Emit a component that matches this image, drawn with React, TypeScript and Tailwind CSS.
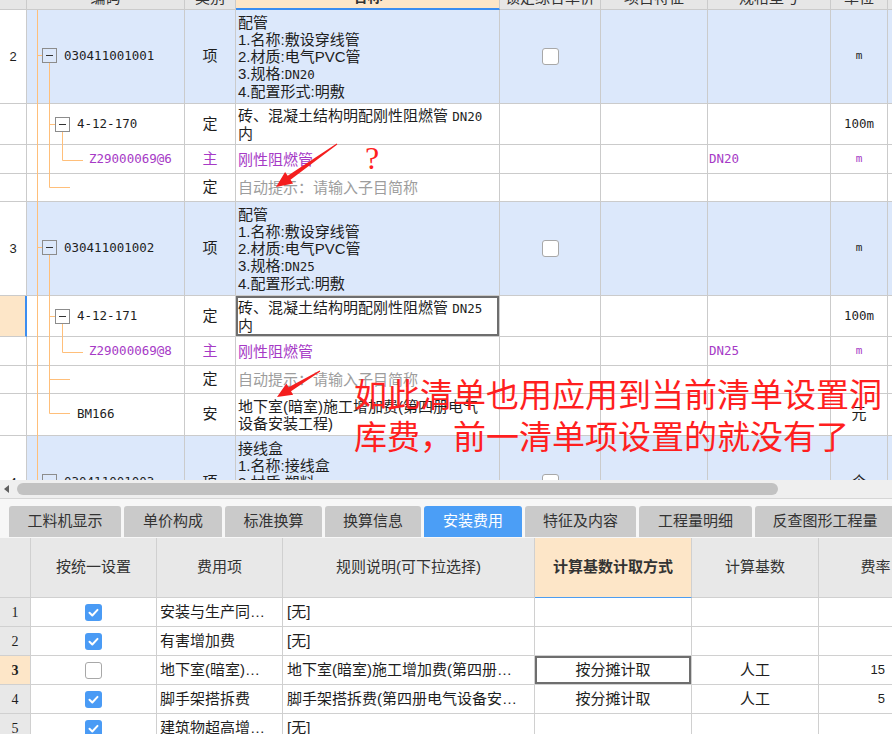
import React from "react";

const bd = "border-[#cbcbcb]";
const lbd = "border-[#d0d0d0]";
const mono = "font-['DejaVu_Sans_Mono',monospace] text-[12.5px]";
const purple = "text-[#a63ac6]";
const blueBg = "bg-[#dce8fb]";
const topCols = "grid grid-cols-[27px_158px_51px_264px_101px_107px_123px_57px_1fr]";
const lowCols = "grid grid-cols-[31px_126px_126px_252px_157px_127px_1fr]";

const M = ({ children, className = "" }: { children: React.ReactNode; className?: string }) => (
  <span className={`${mono} ${className}`}>{children}</span>
);

const Unit = ({ c = "" }: { c?: string }) => (
  <span className={`font-['DejaVu_Sans_Mono',monospace] text-[11px] ${c}`}>m</span>
);

const EmptyBox = () => (
  <span className="inline-block h-[17px] w-[17px] rounded-[3px] border border-[#a8a8a8] bg-white" />
);

const CheckedBox = () => (
  <span className="flex h-[17px] w-[17px] items-center justify-center rounded-[3px] bg-[#4a9bf5]">
    <svg width="13" height="13" viewBox="0 0 13 13">
      <path d="M2.5 6.8l2.8 2.7 5.2-5.6" fill="none" stroke="#fff" strokeWidth="2" strokeLinecap="round" strokeLinejoin="round" />
    </svg>
  </span>
);

type TopRowProps = {
  h: string;
  blue?: boolean;
  num?: string;
  selected?: boolean;
  code?: React.ReactNode;
  pad?: string;
  kind?: React.ReactNode;
  name?: React.ReactNode[];
  check?: boolean;
  spec?: React.ReactNode;
  unit?: React.ReactNode;
};

const TopRow = ({ h, blue, num, selected, code, pad = "pl-[37px]", kind, name = [], check, spec, unit }: TopRowProps) => {
  const bg = blue ? blueBg : "bg-white";
  const cell = `flex items-center border-r border-b ${bd} ${bg}`;
  return (
    <div className={`${topCols} ${h}`}>
      <div
        className={`flex items-center justify-center border-b ${bd} text-[13px] ${
          selected ? "border-r-2 border-r-[#3b8df0] bg-[#fde6c8]" : "border-r bg-white"
        }`}
      >
        {num}
      </div>
      <div className={`${cell} ${pad}`}>{code}</div>
      <div className={`${cell} justify-center`}>{kind}</div>
      <div
        className={`flex flex-col justify-center overflow-hidden whitespace-nowrap border-r border-b ${bd} ${bg} pl-[2px] leading-[17px] ${
          selected ? "shadow-[inset_0_0_0_2px_#6e6e6e]" : ""
        }`}
      >
        {name.map((n, i) => (
          <div key={i}>{n}</div>
        ))}
      </div>
      <div className={`${cell} justify-center`}>{check && <EmptyBox />}</div>
      <div className={cell} />
      <div className={`${cell} pl-px`}>{spec}</div>
      <div className={`${cell} justify-center`}>{unit}</div>
      <div className={`border-b ${bd} ${bg}`} />
    </div>
  );
};

const HeadCell = ({ children, active }: { children?: React.ReactNode; active?: boolean }) => (
  <div
    className={`flex h-[10px] items-end justify-center overflow-hidden border-r ${bd} ${
      active ? "border-b-2 border-b-[#3b8df0] bg-[#fde6c8] font-bold" : "border-b bg-[#e6e6e6]"
    }`}
  >
    <span className="mb-[4px] text-[15px] leading-[15px] text-[#333]">{children}</span>
  </div>
);

const Tree = () => {
  const o = "#ffbf7a";
  const box = (x: number, y: number) => (
    <g>
      <rect x={x + 0.5} y={y + 0.5} width={14} height={14} fill="none" stroke="#8c8c8c" />
      <line x1={x + 4} x2={x + 11} y1={y + 7.5} y2={y + 7.5} stroke="#333" />
    </g>
  );
  const group = (dy: number, end: number, extra?: number) => (
    <g>
      <line x1={38} x2={42} y1={55.5 + dy} y2={55.5 + dy} stroke={o} />
      <line x1={49.5} x2={49.5} y1={63 + dy} y2={end} stroke={o} />
      <line x1={49.5} x2={55} y1={124.5 + dy} y2={124.5 + dy} stroke={o} />
      <line x1={62.5} x2={62.5} y1={132 + dy} y2={160.5 + dy} stroke={o} />
      <line x1={62.5} x2={83} y1={160.5 + dy} y2={160.5 + dy} stroke={o} />
      <line x1={49.5} x2={70} y1={187.5 + dy} y2={187.5 + dy} stroke={o} />
      {extra && <line x1={49.5} x2={70} y1={extra} y2={extra} stroke={o} />}
      {box(42, 48 + dy)}
      {box(55, 117 + dy)}
    </g>
  );
  return (
    <svg className="pointer-events-none absolute left-0 top-0" width="892" height="480">
      <line x1={37.5} x2={37.5} y1={10} y2={480} stroke={o} />
      {group(0, 187.5)}
      {group(192, 413.5, 413.5)}
      <line x1={38} x2={42} y1={481.5} y2={481.5} stroke={o} />
      {box(42, 474)}
    </svg>
  );
};

const tabs = [
  { t: "工料机显示", w: "w-[112px]" },
  { t: "单价构成", w: "w-[98px]" },
  { t: "标准换算", w: "w-[97px]" },
  { t: "换算信息", w: "w-[96px]" },
  { t: "安装费用", w: "w-[98px]", active: true },
  { t: "特征及内容", w: "w-[111px]" },
  { t: "工程量明细", w: "w-[113px]" },
  { t: "反查图形工程量", w: "w-[140px]" },
];

type LowRow = {
  n: string;
  checked: boolean;
  item: string;
  rule: string;
  mode?: string;
  base?: string;
  rate?: string;
  sel?: boolean;
};

const lowRows: LowRow[] = [
  { n: "1", checked: true, item: "安装与生产同…", rule: "[无]" },
  { n: "2", checked: true, item: "有害增加费", rule: "[无]" },
  { n: "3", checked: false, item: "地下室(暗室)…", rule: "地下室(暗室)施工增加费(第四册…", mode: "按分摊计取", base: "人工", rate: "15", sel: true },
  { n: "4", checked: true, item: "脚手架搭拆费", rule: "脚手架搭拆费(第四册电气设备安…", mode: "按分摊计取", base: "人工", rate: "5" },
  { n: "5", checked: true, item: "建筑物超高增…", rule: "[无]" },
];

export default function App() {
  return (
    <div className="relative h-[734px] w-[892px] overflow-hidden bg-white font-['Liberation_Sans','Noto_Sans_CJK_SC',sans-serif] text-[15px] text-[#1e1e1e]">
      {/* upper grid */}
      <div className="relative h-[480px] overflow-hidden">
        <div className={topCols}>
          <HeadCell />
          <HeadCell>编码</HeadCell>
          <HeadCell>类别</HeadCell>
          <HeadCell active>名称</HeadCell>
          <HeadCell>锁定综合单价</HeadCell>
          <HeadCell>项目特征</HeadCell>
          <HeadCell>规格型号</HeadCell>
          <HeadCell>单位</HeadCell>
          <div className={`h-[10px] border-b ${bd} bg-[#e6e6e6]`} />
        </div>

        <TopRow
          h="h-[94px]"
          blue
          num="2"
          code={<M>030411001001</M>}
          kind="项"
          name={["配管", "1.名称:敷设穿线管", "2.材质:电气PVC管", <>3.规格:<M>DN20</M></>, "4.配置形式:明敷"]}
          check
          unit={<Unit />}
        />
        <TopRow
          h="h-[41px]"
          code={<M>4-12-170</M>}
          pad="pl-[50px]"
          kind="定"
          name={[<>砖、混凝土结构明配刚性阻燃管 <M>DN20</M></>, "内"]}
          unit={<M>100m</M>}
        />
        <TopRow
          h="h-[29px]"
          code={<M className={purple}>Z29000069@6</M>}
          pad="pl-[62px]"
          kind={<span className={purple}>主</span>}
          name={[<span className={purple}>刚性阻燃管</span>]}
          spec={<M className={purple}>DN20</M>}
          unit={<Unit c={purple} />}
        />
        <TopRow h="h-[28px]" kind="定" name={[<span className="text-[#9d9d9d]">自动提示：请输入子目简称</span>]} />

        <TopRow
          h="h-[94px]"
          blue
          num="3"
          code={<M>030411001002</M>}
          kind="项"
          name={["配管", "1.名称:敷设穿线管", "2.材质:电气PVC管", <>3.规格:<M>DN25</M></>, "4.配置形式:明敷"]}
          check
          unit={<Unit />}
        />
        <TopRow
          h="h-[41px]"
          selected
          code={<M>4-12-171</M>}
          pad="pl-[50px]"
          kind="定"
          name={[<>砖、混凝土结构明配刚性阻燃管 <M>DN25</M></>, "内"]}
          unit={<M>100m</M>}
        />
        <TopRow
          h="h-[29px]"
          code={<M className={purple}>Z29000069@8</M>}
          pad="pl-[62px]"
          kind={<span className={purple}>主</span>}
          name={[<span className={purple}>刚性阻燃管</span>]}
          spec={<M className={purple}>DN25</M>}
          unit={<Unit c={purple} />}
        />
        <TopRow h="h-[28px]" kind="定" name={[<span className="text-[#9d9d9d]">自动提示：请输入子目简称</span>]} />
        <TopRow
          h="h-[42px]"
          code={<M>BM166</M>}
          pad="pl-[50px]"
          kind="安"
          name={["地下室(暗室)施工增加费(第四册电气", "设备安装工程)"]}
          unit="元"
        />
        <TopRow
          h="h-[94px]"
          blue
          num="4"
          code={<M>030411001003</M>}
          kind="项"
          name={["接线盒", "1.名称:接线盒", "2.材质:塑料", "3.规格:86H", "4.安装形式:暗装"]}
          check
          unit="个"
        />
        <Tree />
      </div>

      {/* horizontal scrollbar */}
      <div className="flex h-[19px] items-center border-b border-[#d6d6d6] bg-[#efefef]">
        <span className="ml-[4px] h-0 w-0 border-y-[4px] border-r-[5px] border-y-transparent border-r-[#5f5f5f]" />
        <span className="ml-[8px] h-[12px] w-[761px] rounded-full bg-[#c2c2c2]" />
      </div>

      {/* tabs */}
      <div className="flex h-[39px] gap-[3px] bg-[#f7f7f7] pl-[9px] pt-[7px]">
        {tabs.map((t) => (
          <div
            key={t.t}
            className={`flex h-[31px] shrink-0 items-center justify-center rounded-t-[3px] ${t.w} ${
              t.active ? "bg-[#4b9ef6] text-white" : "bg-[#cacaca] text-[#333]"
            }`}
          >
            {t.t}
          </div>
        ))}
      </div>

      {/* lower grid */}
      <div className={`${lowCols} h-[60px] text-[#333]`}>
        <div className={`border-r border-b ${lbd} bg-[#e8e8e8]`} />
        <div className={`flex items-center justify-center border-r border-b ${lbd} bg-[#e8e8e8]`}>按统一设置</div>
        <div className={`flex items-center justify-center border-r border-b ${lbd} bg-[#e8e8e8]`}>费用项</div>
        <div className={`flex items-center justify-center border-r border-b ${lbd} bg-[#e8e8e8]`}>规则说明(可下拉选择)</div>
        <div className={`flex items-center justify-center border-r border-b border-b-[#4d9df0] ${lbd} bg-[#fde6c8] font-bold`}>
          计算基数计取方式
        </div>
        <div className={`flex items-center justify-center border-r border-b ${lbd} bg-[#e8e8e8]`}>计算基数</div>
        <div className={`flex items-center justify-center whitespace-nowrap border-b ${lbd} bg-[#e8e8e8] pl-[40px]`}>费率</div>
      </div>
      {lowRows.map((r) => (
        <div key={r.n} className={`${lowCols} h-[29px]`}>
          <div
            className={`flex items-center justify-center border-r border-b ${lbd} font-['Liberation_Serif',serif] text-[14px] ${
              r.sel ? "bg-[#fde6c8] font-bold" : "bg-[#e8e8e8]"
            }`}
          >
            {r.n}
          </div>
          <div className={`flex items-center justify-center border-r border-b ${lbd}`}>
            {r.checked ? <CheckedBox /> : <EmptyBox />}
          </div>
          <div className={`flex items-center whitespace-nowrap border-r border-b ${lbd} pl-[3px]`}>{r.item}</div>
          <div className={`flex items-center whitespace-nowrap border-r border-b ${lbd} pl-[4px]`}>{r.rule}</div>
          <div
            className={`flex items-center justify-center border-r border-b ${lbd} ${
              r.sel ? "shadow-[inset_0_0_0_2px_#6e6e6e]" : ""
            }`}
          >
            {r.mode}
          </div>
          <div className={`flex items-center justify-center border-r border-b ${lbd}`}>{r.base}</div>
          <div className={`flex items-center justify-end border-b ${lbd} pr-[7px] text-[13px]`}>{r.rate}</div>
        </div>
      ))}

      {/* annotations */}
      <svg className="pointer-events-none absolute left-0 top-0" width="892" height="734">
        <polygon
          points="337.3,144.4 290.5,179.8 293.1,183.5 276,187 285.1,172.1 287.7,175.8 336.7,143.6"
          fill="#f41e1e"
        />
        <polygon
          points="320.3,371.4 291,391.2 293.2,394.8 277,397 286.4,383.6 288.6,387.2 319.7,370.6"
          fill="#f41e1e"
        />
      </svg>
      <div className="absolute left-[365px] top-[142px] font-['Liberation_Serif',serif] text-[32px] leading-none text-[#ff1f1f]">
        ?
      </div>
      <div className="absolute left-[354px] top-[372px] whitespace-nowrap font-['Noto_Sans_CJK_SC',sans-serif] text-[33px] leading-[42px] text-[#ff1f1f]">
        <div>如此清单也用应用到当前清单设置洞</div>
        <div>库费，前一清单项设置的就没有了</div>
      </div>
    </div>
  );
}
